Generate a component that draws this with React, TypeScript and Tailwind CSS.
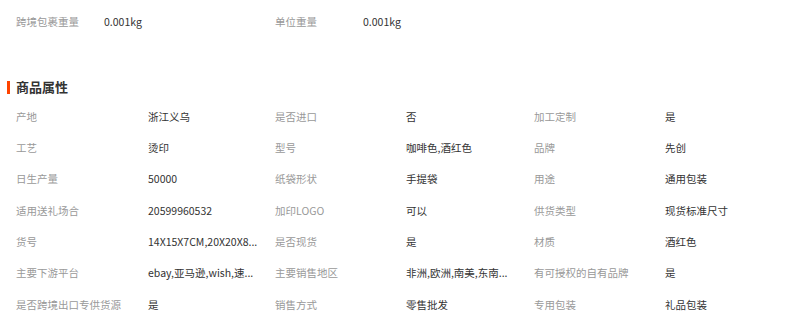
const rows: [string, string, string, string, string, string][] = [
  ["产地", "浙江义乌", "是否进口", "否", "加工定制", "是"],
  ["工艺", "烫印", "型号", "咖啡色,酒红色", "品牌", "先创"],
  ["日生产量", "50000", "纸袋形状", "手提袋", "用途", "通用包装"],
  ["适用送礼场合", "20599960532", "加印LOGO", "可以", "供货类型", "现货标准尺寸"],
  ["货号", "14X15X7CM,20X20X8...", "是否现货", "是", "材质", "酒红色"],
  ["主要下游平台", "ebay,亚马逊,wish,速...", "主要销售地区", "非洲,欧洲,南美,东南...", "有可授权的自有品牌", "是"],
  ["是否跨境出口专供货源", "是", "销售方式", "零售批发", "专用包装", "礼品包装"],
];

export default function App() {
  return (
    <div className="w-[800px] h-[314px] overflow-hidden bg-white pt-[12px] text-[10.5px] font-['Noto_Sans_CJK_SC','Liberation_Sans',sans-serif]">
      <div className="grid grid-cols-[88px_171px_88px_1fr] pl-[16px] h-[20px] leading-[20px]">
        <span className="text-[#999]">跨境包裹重量</span>
        <span className="text-[#333]">0.001kg</span>
        <span className="text-[#999]">单位重量</span>
        <span className="text-[#333]">0.001kg</span>
      </div>

      <div className="mt-[45px] flex items-center h-[20px]">
        <span className="ml-[7px] w-[3px] h-[13px] bg-[#ff4400]" />
        <span className="ml-[6px] text-[13px] font-bold text-[#333]">商品属性</span>
      </div>

      <div className="mt-[4px] pl-[16px]">
        {rows.map((r, i) => (
          <div
            key={i}
            className="grid grid-cols-[132px_127px_131px_128px_131px_1fr] h-[31.33px] items-center whitespace-nowrap"
          >
            <span className="text-[#999]">{r[0]}</span>
            <span className="text-[#333]">{r[1]}</span>
            <span className="text-[#999]">{r[2]}</span>
            <span className="text-[#333]">{r[3]}</span>
            <span className="text-[#999]">{r[4]}</span>
            <span className="text-[#333]">{r[5]}</span>
          </div>
        ))}
      </div>
    </div>
  );
}
